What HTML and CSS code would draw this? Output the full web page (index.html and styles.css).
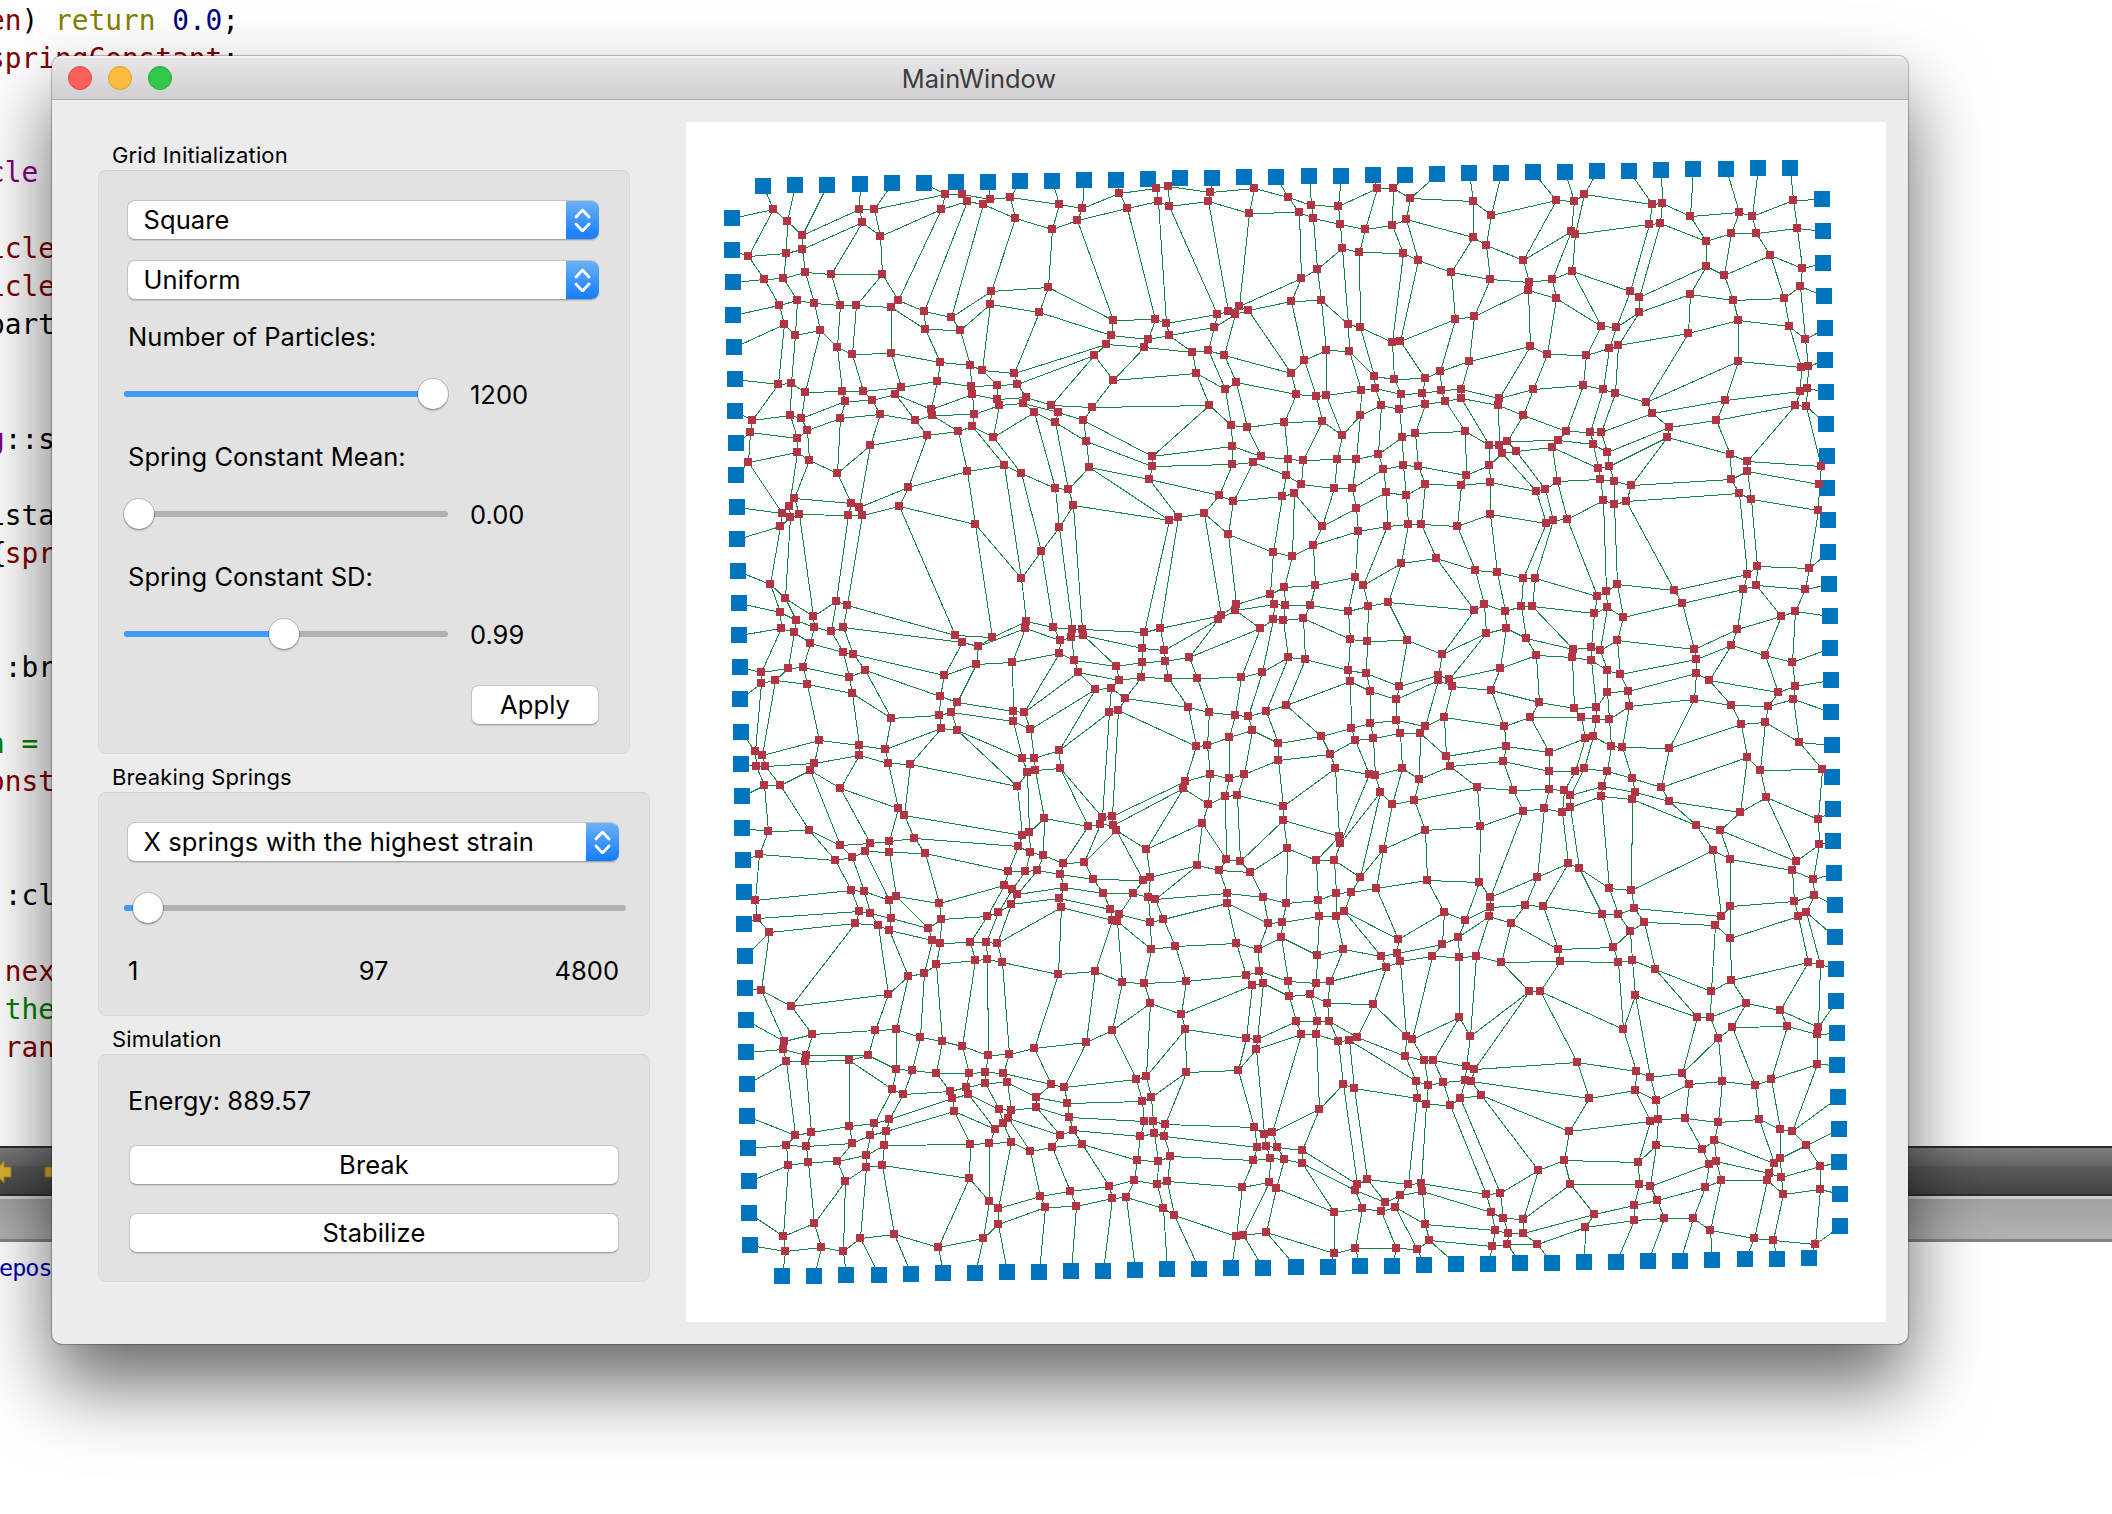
FILE: index.html
```html
<!DOCTYPE html>
<html lang="en">
<head>
<meta charset="utf-8">
<title>MainWindow</title>
<link rel="stylesheet" href="styles.css">
</head>
<body>
<div class="editor">
  <pre class="code"><span class="maroon">en</span>) <span class="olive">return</span> <span class="navy">0.0</span>;
<span class="maroon">springConstant</span>;


<span class="purple">cle</span>

<span class="maroon">icle</span>
<span class="maroon">icle</span>
part


<span class="purple">g</span>::s

ista
<span class="brace">{</span><span class="maroon">spr</span>


 :br

<span class="green">n =</span>
<span class="maroon">onst</span>


 :cl

 <span class="maroon">nex</span>
 <span class="green">the</span>
 <span class="maroon">ran</span></pre>
  <div class="pane-bar">
    <svg class="bar-arrows" width="70" height="26" viewBox="0 0 70 26">
      <path d="M-6 13 L4 2 V8 H11 V18 H4 V24 Z"/>
      <path d="M45 8 H53 V2 L64 13 L53 24 V18 H45 Z"/>
    </svg>
  </div>
  <div class="pane-tabs"></div>
  <div class="output">epos</div>
</div>

<main class="window">
  <header class="titlebar">
    <div class="lights"><i class="light close"></i><i class="light minimize"></i><i class="light zoom"></i></div>
    <h1 class="title">MainWindow</h1>
  </header>
  <div class="content">
    <div class="controls">
      <h2 class="legend">Grid Initialization</h2>
      <section class="group grid-init">
        <div class="combo"><span class="combo-text">Square</span><span class="combo-btn"><svg width="17" height="24" viewBox="0 0 17 24"><path d="M2 9 L8.5 2 L15 9 M2 16 L8.5 23 L15 16"/></svg></span></div>
        <div class="combo second"><span class="combo-text">Uniform</span><span class="combo-btn"><svg width="17" height="24" viewBox="0 0 17 24"><path d="M2 9 L8.5 2 L15 9 M2 16 L8.5 23 L15 16"/></svg></span></div>
        <div class="label">Number of Particles:</div>
        <div class="slider-row"><div class="slider"><div class="fill" style="width:309px"></div><div class="knob" style="left:309px"></div></div><span class="value">1200</span></div>
        <div class="label">Spring Constant Mean:</div>
        <div class="slider-row"><div class="slider"><div class="fill" style="width:0"></div><div class="knob" style="left:15px"></div></div><span class="value">0.00</span></div>
        <div class="label">Spring Constant SD:</div>
        <div class="slider-row"><div class="slider"><div class="fill" style="width:160px"></div><div class="knob" style="left:160px"></div></div><span class="value">0.99</span></div>
        <button class="btn apply">Apply</button>
      </section>

      <h2 class="legend">Breaking Springs</h2>
      <section class="group breaking">
        <div class="combo"><span class="combo-text">X springs with the highest strain</span><span class="combo-btn"><svg width="17" height="24" viewBox="0 0 17 24"><path d="M2 9 L8.5 2 L15 9 M2 16 L8.5 23 L15 16"/></svg></span></div>
        <div class="slider-row wide"><div class="slider"><div class="fill" style="width:24px"></div><div class="knob" style="left:24px"></div></div></div>
        <div class="range"><span>1</span><span>97</span><span>4800</span></div>
      </section>

      <h2 class="legend">Simulation</h2>
      <section class="group simulation">
        <div class="label">Energy: 889.57</div>
        <button class="btn">Break</button>
        <button class="btn">Stabilize</button>
      </section>
    </div>
    <div class="canvas">
      <svg id="mesh" width="1200" height="1200" viewBox="0 0 1200 1200"></svg>
    </div>
  </div>
</main>
<script src="mesh.js"></script>
</body>
</html>
```
FILE: styles.css
```css
* { box-sizing: border-box; }

body {
  margin: 0;
  width: 2112px;
  height: 1514px;
  overflow: hidden;
  position: relative;
  background: #fff;
  font-family: Inter, "Liberation Sans", sans-serif;
  color: #000;
}

/* Editor behind the window */
.editor { display: flex; flex-direction: column; height: 1514px; }

.code {
  margin: 0 0 0 -12px;
  padding: 2px 0 0;
  height: 1146px;
  flex: none;
  overflow: hidden;
  font: 27.8px/38.04px "DejaVu Sans Mono", monospace;
}
.brace { margin: 0 -2px 0 2px; }
.maroon { color: #800000; }
.olive { color: #808000; }
.navy { color: #000080; }
.purple { color: #800080; }
.green { color: #008000; }

.pane-bar {
  flex: none;
  height: 50px;
  display: flex;
  align-items: center;
  border-top: 2px solid #2c2c2c;
  border-bottom: 2px solid #2e2e2e;
  background: linear-gradient(#7c7c7c, #666 38%, #5a5a5a 40%, #444);
}
.bar-arrows { margin-top: 2px; fill: #d9b22f; stroke: #a28418; stroke-width: 1; }

.pane-tabs {
  flex: none;
  height: 46px;
  border-top: 3px solid #d0d0d0;
  border-bottom: 3px solid #858585;
  background: linear-gradient(#a2a2a2, #b2b2b2);
}

.output {
  margin: 11px 0 0 -1px;
  font: 23.5px/30px "DejaVu Sans Mono", monospace;
  letter-spacing: -1px;
  color: #0000b4;
}

/* Window */
.window {
  position: absolute;
  left: 52px;
  top: 56px;
  width: 1856px;
  height: 1288px;
  display: flex;
  flex-direction: column;
  border-radius: 10px;
  overflow: hidden;
  background: #ececec;
  box-shadow: 0 0 1px 1px rgba(0,0,0,.26), 0 40px 78px rgba(0,0,0,.6);
}

.titlebar {
  flex: none;
  height: 44px;
  display: grid;
  grid-template-columns: 1fr auto 1fr;
  align-items: center;
  padding: 0 16px;
  background: linear-gradient(#e8e6e8, #d1cfd1);
  border-bottom: 1px solid #b1afb1;
  box-shadow: inset 0 2px #f4f3f4;
}
.lights { display: flex; gap: 16px; }
.light { width: 24px; height: 24px; border-radius: 50%; border: 1px solid; }
.close { background: #fc605b; border-color: #e04744; }
.minimize { background: #fdbd41; border-color: #dfa032; }
.zoom { background: #34c84a; border-color: #24ab36; }
.title {
  margin: 2px 2px 0 0;
  font-size: 25.4px;
  line-height: 30px;
  font-weight: 400;
  color: #3c3c3c;
}

.content { flex: 1; display: flex; justify-content: space-between; padding: 22px 22px 22px 46px; }
.controls { width: 552px; padding-top: 19px; }

.legend { margin: 0; height: 29px; padding: 1px 0 0 14px; font-size: 22px; letter-spacing: .15px; line-height: 27px; font-weight: 400; }
.group {
  display: flex;
  flex-direction: column;
  margin-bottom: 9px;
  border: 1px solid #dadada;
  border-top-color: #d2d2d2;
  border-radius: 8px;
  background: #e2e2e2;
}
.grid-init { width: 532px; height: 584px; padding: 29px 30px 0 29px; }
.breaking { height: 224px; padding: 29px 30px 0 29px; }
.simulation { height: 228px; padding: 30px 30px 0; }

.combo {
  height: 40px;
  margin-left: -1px;
  display: flex;
  align-items: stretch;
  overflow: hidden;
  border-radius: 8px;
  background: #fff;
  border: 1px solid #c4c4c4;
  border-right: 0;
  border-bottom-color: #a4a4a4;
  box-shadow: 0 1px 1px rgba(0,0,0,.12);
}
.combo.second { margin-top: 20px; }
.combo-text { flex: 1; padding-left: 15.5px; font-size: 25.5px; letter-spacing: .1px; line-height: 38px; white-space: nowrap; }
.combo-btn {
  width: 33px;
  margin: -1px 0;
  display: flex;
  align-items: center;
  justify-content: center;
  background: linear-gradient(#6db3f8, #3f97f9 50%, #157cfb);
  border-bottom: 1px solid #0f66dd;
}
.combo-btn svg { fill: none; stroke: #fff; stroke-width: 2.8; stroke-linecap: round; stroke-linejoin: round; }

.label { margin-top: 32px; font-size: 25.5px; letter-spacing: .05px; line-height: 30px; white-space: nowrap; }
.grid-init .combo + .label { margin-top: 22px; }
.simulation .label { margin: 1px 0 -1px -1px; }

.slider-row { display: flex; align-items: center; height: 32px; margin: 26px 0 0 -4px; }
.slider { position: relative; width: 324px; height: 6px; border-radius: 3px; background: #b1b1b1; }
.wide { margin: 30px 0 0 -4px; }
.wide .slider { flex: none; width: 502px; }
.fill { height: 6px; border-radius: 3px; background: #419bf9; }
.knob {
  position: absolute;
  top: -13px;
  width: 30px;
  height: 30px;
  margin: 1px 0 0 -15px;
  border-radius: 50%;
  background: #fff;
  box-shadow: 0 0 0 1px rgba(0,0,0,.18), 0 2px 2px rgba(0,0,0,.2);
}
.value { margin: 2px 0 0 22px; font-size: 25.5px; line-height: 30px; }

.btn {
  flex: none;
  height: 40px;
  padding: 0;
  border: 1px solid #c6c6c6;
  border-bottom-color: #a4a4a4;
  border-radius: 8px;
  background: #fff;
  box-shadow: 0 1px 1px rgba(0,0,0,.12);
  font: 25.5px/38px Inter, "Liberation Sans", sans-serif;
  letter-spacing: .1px;
  color: #000;
}
.apply { width: 128px; margin-top: 35px; align-self: flex-end; }
.simulation .btn { margin-top: 30px; }
.simulation .btn + .btn { margin-top: 28px; }

.range { display: grid; grid-template-columns: 1fr auto 1fr; margin-top: 32px; font-size: 25.5px; line-height: 30px; }
.range span:last-child { text-align: right; }

.canvas { width: 1200px; height: 1200px; background: #fff; }
.canvas svg { display: block; }
.springs { fill: none; stroke: #148345; stroke-width: 1; shape-rendering: crispEdges; }
.fixed { fill: #0074bf; shape-rendering: crispEdges; }
.particle { fill: #b03545; shape-rendering: crispEdges; }
```
FILE: mesh.js
```js
// Particle lattice. Every line is one row of the lattice: "left anchor / 33 particles / right anchor".
// Coordinates are thirds of a pixel; "|" moves the x origin one block (1140) to the right.
const BLOCK = 1140;
const ORIGIN_X = 34, ORIGIN_Y = 28;

const rows = [
`36,204 159,177 201,213 246,255 417,177 462,177 675,132 726,132 810,147 870,141 1017,162 1086,174 | 57,129 168,114 204,108 330,126 462,114 564,141 633,165 714,168 831,114 879,114 930,144 1119,153 | 33,195 228,150 282,153 312,132 516,162 546,159 630,198 777,186 816,198 939,150 1026,147`,
`36,300 84,318 198,309 246,297 426,216 480,258 663,177 741,153 789,162 885,204 996,237 1071,210 | 81,174 174,153 207,168 324,153 447,189 597,186 639,204 720,222 795,237 876,225 918,207 1119,261 | 18,285 129,330 273,243 285,252 507,222 540,219 678,273 753,249 828,249 951,234 1029,243`,
`39,396 132,387 189,384 255,366 333,372 486,372 534,450 612,483 693,501 813,423 984,411 | 39,510 165,507 198,519 351,492 384,483 417,468 603,384 651,357 726,294 777,306 909,309 954,330 1053,366 | 30,387 147,396 216,387 276,363 450,423 477,441 678,348 732,375 870,315 966,354 1029,339`,
`39,495 177,465 231,450 282,459 360,465 408,465 513,471 615,537 720,540 810,462 957,486 | 33,555 144,567 207,555 342,531 405,492 444,480 573,453 663,450 744,522 780,531 876,576 900,573 1065,507 1122,498 | 144,420 228,444 363,528 408,531 477,486 630,432 759,450 912,444 960,408 1032,438`,
`42,591 192,522 225,555 300,540 351,591 396,612 513,609 660,636 750,645 786,660 882,669 | 18,582 132,591 276,606 324,600 372,615 573,669 612,630 678,600 747,603 822,678 882,687 975,684 1020,663 1107,633 | 150,588 201,612 318,615 387,594 414,585 624,549 774,510 927,528 975,567 1035,534`,
`45,687 174,702 213,699 255,726 366,723 429,723 543,711 651,693 753,708 831,705 891,702 1122,615 | 39,690 288,669 375,717 408,696 588,732 648,738 678,735 783,720 825,714 903,732 966,729 1023,720 1083,717 | 57,744 159,717 309,705 369,717 405,729 498,756 774,633 963,651 984,648 1035,630`,
`45,783 96,810 210,795 243,804 375,753 456,750 525,732 633,777 756,732 831,747 918,741 993,765 1116,771 | 327,765 393,825 441,831 552,816 666,813 726,855 780,795 843,765 897,777 975,762 1035,753 1083,744 | 54,765 129,795 258,843 330,846 363,846 516,789 735,750 960,723 981,714 1038,726`,
`48,879 90,846 231,864 261,840 360,804 480,792 585,810 636,795 762,792 837,765 909,759 1014,786 1089,810 | 156,918 396,888 483,918 564,927 609,930 711,927 768,927 834,912 906,861 945,849 1095,843 | 27,885 57,885 81,873 234,870 339,882 381,906 567,831 708,810 945,765 978,768 1038,822`,
`48,975 84,936 231,906 267,930 351,969 450,885 621,855 714,843 756,828 819,861 942,786 1005,816 1098,873 | 156,948 396,942 459,936 558,975 603,1002 702,1014 756,1014 849,957 909,945 954,948 1098,975 | 27,945 66,909 108,903 216,891 354,954 387,948 561,861 750,912 801,933 1023,948 1041,918`,
`51,1071 186,1089 207,1068 222,1044 393,1059 417,1071 564,1011 741,963 852,945 903,969 1005,1014 1044,1017 1107,951 | 147,987 357,1035 399,1053 546,1038 582,1029 666,1128 768,1074 858,1026 918,1035 975,1002 1083,1005 | 30,996 168,1023 195,1017 231,993 360,987 402,993 453,1005 753,987 801,963 1017,1002 1041,1014`,
`51,1167 180,1128 210,1101 237,1092 384,1095 426,1095 537,1068 765,1122 903,1284 963,1203 1017,1131 1059,1065 | 207,1110 234,1101 312,1089 384,1152 519,1206 576,1218 639,1185 774,1143 861,1128 924,1122 963,1122 1071,1128 | 30,1092 198,1119 219,1110 261,1107 369,1050 402,1062 438,1053 777,1029 813,1047 1014,1080 1044,1110`,

`54,123 150,162 195,204 279,258 348,213 381,225 705,315 816,321 918,273 999,291 1056,297 1086,297 | 132,306 180,294 363,255 408,222 510,192 552,171 645,165 765,141 789,165 903,99 1008,84 1125,120 | 51,126 129,144 165,144 351,198 378,183 411,162 582,180 801,132 831,108 987,114 1044,66`,
`57,219 180,246 228,270 282,291 333,303 369,291 726,336 774,348 915,294 1020,330 1053,321 1089,315 | 126,354 192,360 354,267 405,240 522,222 555,225 630,225 744,243 804,228 864,216 1122,240 | 12,222 75,243 123,228 156,228 342,249 381,231 429,261 606,219 789,177 828,165 975,177 1047,162`,
`57,315 183,294 222,306 270,339 369,366 399,372 672,435 768,402 876,396 1017,369 1062,390 | 48,408 126,396 195,393 267,381 480,294 519,267 549,270 609,264 750,327 801,333 921,330 1026,372 | 18,309 78,294 138,324 279,357 333,351 360,360 411,330 642,357 771,297 903,258 945,243 1050,258`,
`60,411 123,426 204,414 249,411 387,441 435,420 660,498 711,516 879,543 912,546 1074,426 | 57,450 123,441 204,444 291,444 423,441 486,426 564,381 615,387 744,420 798,429 897,468 1014,435 1047,447 | 60,414 168,375 276,381 333,390 381,420 420,432 648,387 753,345 855,375 936,396 1050,354`,
`60,507 123,459 165,450 261,462 396,489 513,564 657,555 693,546 879,573 930,597 1125,477 | 33,474 75,504 264,531 327,546 405,555 444,558 498,543 558,525 750,453 810,483 888,507 1014,450 1056,468 | 33,480 177,516 282,534 348,531 381,486 444,483 648,429 687,450 894,486 945,468 1053,450`,
`63,606 105,663 126,675 297,630 417,645 495,657 663,594 711,600 906,684 942,684 1017,660 | 27,546 54,540 288,648 321,645 387,621 456,600 534,639 663,618 753,594 810,579 888,570 975,588 1032,561 | 72,588 150,561 303,561 348,567 387,567 447,528 642,507 753,525 864,528 939,507 1053,546`,
`63,702 108,708 135,708 282,699 417,675 504,699 570,702 891,768 921,726 945,720 1020,714 | 6,861 36,858 255,753 330,732 387,744 432,732 534,690 690,672 765,630 819,624 900,609 960,609 1038,678 | 78,648 207,666 315,624 339,618 393,648 426,651 567,654 783,582 855,576 957,636 1056,645`,
`66,798 132,765 180,765 270,720 360,774 534,834 552,855 906,915 927,906 972,864 1104,888 | 0,882 39,885 249,774 324,822 375,798 411,795 549,828 705,714 807,732 825,735 906,714 957,747 1050,708 | 69,693 207,723 285,723 312,714 381,723 456,744 543,771 801,681 840,720 1026,717 1056,741`,
`66,894 144,903 267,900 360,945 450,939 507,933 582,924 894,948 930,966 969,975 1029,999 1092,996 | 48,900 138,957 306,879 378,987 420,993 549,870 717,918 720,939 840,786 876,822 942,810 1131,771 | 99,780 207,777 252,780 270,795 366,768 465,786 567,813 780,846 858,801 1014,867 1059,837`,
`69,990 117,972 345,990 396,981 435,963 507,966 615,969 864,1023 915,1023 951,1020 1020,1032 1119,1047 | 129,1050 150,1041 291,1005 357,1020 450,1026 561,954 648,990 702,990 780,1041 849,957 975,900 1140,888 | 129,843 192,834 246,846 270,831 363,798 456,807 648,885 720,900 948,993 1017,942 1059,933`,
`72,1086 105,1110 393,1080 432,1083 507,1110 528,1098 657,1119 852,1065 876,1077 891,1092 1032,1071 | 9,1089 99,1089 144,1101 165,1107 381,1089 489,1101 558,1119 654,1110 708,1089 753,1086 828,1074 981,1050 1137,1056 | 30,1101 171,1041 264,999 297,1014 387,1074 453,1080 699,960 750,987 936,1020 999,1047 1062,1029`,

`72,42 111,24 417,3 450,9 513,24 624,54 663,27 801,18 834,6 873,-18 1017,-36 | 30,-3 57,12 150,36 189,27 381,-21 504,39 546,36 657,18 708,18 732,3 894,87 1032,6 1095,30 | 30,-9 135,-15 189,-12 366,12 414,12 462,-6 723,18 750,-12 942,-27 1002,-45 1065,-15`,
`75,138 147,66 405,39 474,45 507,60 636,90 660,99 750,96 798,96 831,99 1023,-9 | 36,30 51,33 153,117 225,108 408,99 474,117 543,81 651,135 729,117 843,138 891,129 1026,102 1074,81 | 27,18 93,39 234,117 399,111 450,63 492,36 705,45 750,84 954,18 978,6 1065,81`,
`75,234 123,240 213,288 504,252 564,198 612,189 648,162 765,150 801,147 846,156 1014,192 1125,183 | 66,216 132,219 258,213 438,195 477,183 564,213 648,219 690,213 858,171 900,153 996,138 1077,141 1128,138 | 63,156 240,153 414,156 456,150 525,177 693,243 753,210 984,156 1020,162 1068,177`,
`78,330 192,393 276,372 465,360 528,357 600,381 666,393 726,408 804,435 867,432 942,414 1098,396 | 36,360 150,279 243,312 456,225 489,219 567,258 630,252 681,279 819,282 918,378 936,387 1077,321 1110,378 | 147,243 180,243 429,357 465,255 651,321 690,321 798,279 900,300 1014,351 1068,273`,
`78,426 189,417 258,435 444,435 528,477 576,480 648,489 747,489 795,486 849,489 993,522 1032,531 | 108,507 138,498 255,357 438,384 471,387 588,333 651,333 687,333 771,381 915,438 972,450 999,450 1098,468 1122,477 | 291,456 468,483 510,501 606,489 714,384 756,351 921,348 1011,372 1071,369`,
`81,522 198,453 255,453 387,450 516,537 549,552 690,543 738,531 795,519 861,516 948,561 1041,579 | 126,573 153,561 258,486 414,480 468,417 603,372 648,372 714,393 747,390 948,513 984,525 1029,516 1095,510 1113,513 | 327,564 465,540 528,570 627,522 726,513 825,525 873,507 1011,462 1071,465`,
`81,618 225,675 273,666 387,648 462,639 507,627 696,564 744,552 837,597 873,600 948,591 1047,621 | 132,633 159,633 195,642 462,651 492,672 516,666 657,597 729,522 762,534 951,564 978,582 1050,585 1080,564 1143,555 | 267,663 510,633 534,627 615,624 714,636 837,627 900,657 936,663 1074,561`,
`84,714 198,705 258,708 396,699 450,675 498,663 702,603 825,657 849,639 864,624 1020,675 1059,660 | 120,678 162,669 192,678 471,711 498,708 531,711 606,720 771,822 801,807 924,822 963,819 | 18,852 60,849 174,780 252,750 474,756 528,705 666,717 702,690 882,759 900,744 978,705 1077,657`,
`87,813 204,765 264,756 351,753 438,735 492,705 750,702 807,699 873,696 930,723 996,711 1086,702 | 111,750 174,753 210,738 459,750 510,744 552,747 606,759 765,840 855,876 900,855 966,843 | 33,906 69,924 129,927 270,822 477,822 510,828 687,762 708,753 867,789 903,801 1020,768 1077,756`,
`87,909 189,978 282,939 375,813 438,771 486,765 747,804 807,873 834,894 960,858 1050,843 | 27,828 102,810 171,822 201,813 426,831 507,816 528,834 702,906 786,894 843,903 885,891 975,942 | 45,960 84,969 129,969 342,912 462,885 531,870 675,831 723,810 861,810 909,852 1020,837 1080,852`,
`90,1005 195,1023 303,1011 369,1023 420,984 522,972 654,1011 789,984 834,942 975,891 1068,888 | 36,864 78,861 189,894 222,915 408,978 429,975 498,966 702,1029 765,1014 888,1014 951,1017 987,990 | 36,1008 81,1002 171,1002 315,951 462,930 552,924 639,924 690,960 822,984 879,990 1005,1002 1080,948`
];

const topAnchors = `129,108 225,105 321,105 420,102 516,99 612,99 708,96 804,96 900,93 996,93 1092,90 | 48,90 144,87 240,84 336,84 432,81 528,81 627,78 723,78 819,75 915,75 1011,72 1107,69 | 63,69 159,66 255,66 351,63 447,63 543,60 639,57 738,57 834,54 930,54`;
const bottomAnchors = `186,1098 282,1098 378,1095 477,1095 573,1092 669,1089 765,1089 861,1086 957,1086 1053,1083 | 9,1083 105,1080 201,1077 297,1077 393,1074 489,1074 588,1071 684,1071 780,1068 876,1068 972,1065 1068,1062 | 24,1062 120,1059 216,1059 312,1056 408,1056 504,1053 600,1053 696,1050 795,1047 891,1047 987,1044`;

function parse(text, band) {
  return text.split('|').flatMap((part, block) =>
    part.trim().split(/\s+/).map(pair => {
      const [x, y] = pair.split(',').map(Number);
      return [Math.round((x + block * BLOCK) / 3) + ORIGIN_X,
              Math.round((y + band * BLOCK) / 3) + ORIGIN_Y];
    }));
}

const grid = rows.map((row, i) => parse(row, Math.floor(i / 11)));
const top_ = parse(topAnchors, 0);
const bottom = parse(bottomAnchors, 2);

const path = points => 'M' + points.map(([x, y]) => `${x + 0.5} ${y + 0.5}`).join('L');
const square = ([x, y], r) => `M${x - r} ${y - r}h${2 * r}v${2 * r}h${-2 * r}z`;

let springs = grid.map(path).join('');
for (let c = 0; c < 33; c++) {
  springs += path([top_[c], ...grid.map(row => row[c + 1]), bottom[c]]);
}

const anchors = [...top_, ...bottom, ...grid.map(r => r[0]), ...grid.map(r => r[34])];
const particles = grid.flatMap(r => r.slice(1, 34));

document.getElementById('mesh').innerHTML =
  `<path class="springs" d="${springs}"/>` +
  `<path class="fixed" d="${anchors.map(p => square(p, 8)).join('')}"/>` +
  `<path class="particle" d="${particles.map(p => square(p, 4)).join('')}"/>`;
```
